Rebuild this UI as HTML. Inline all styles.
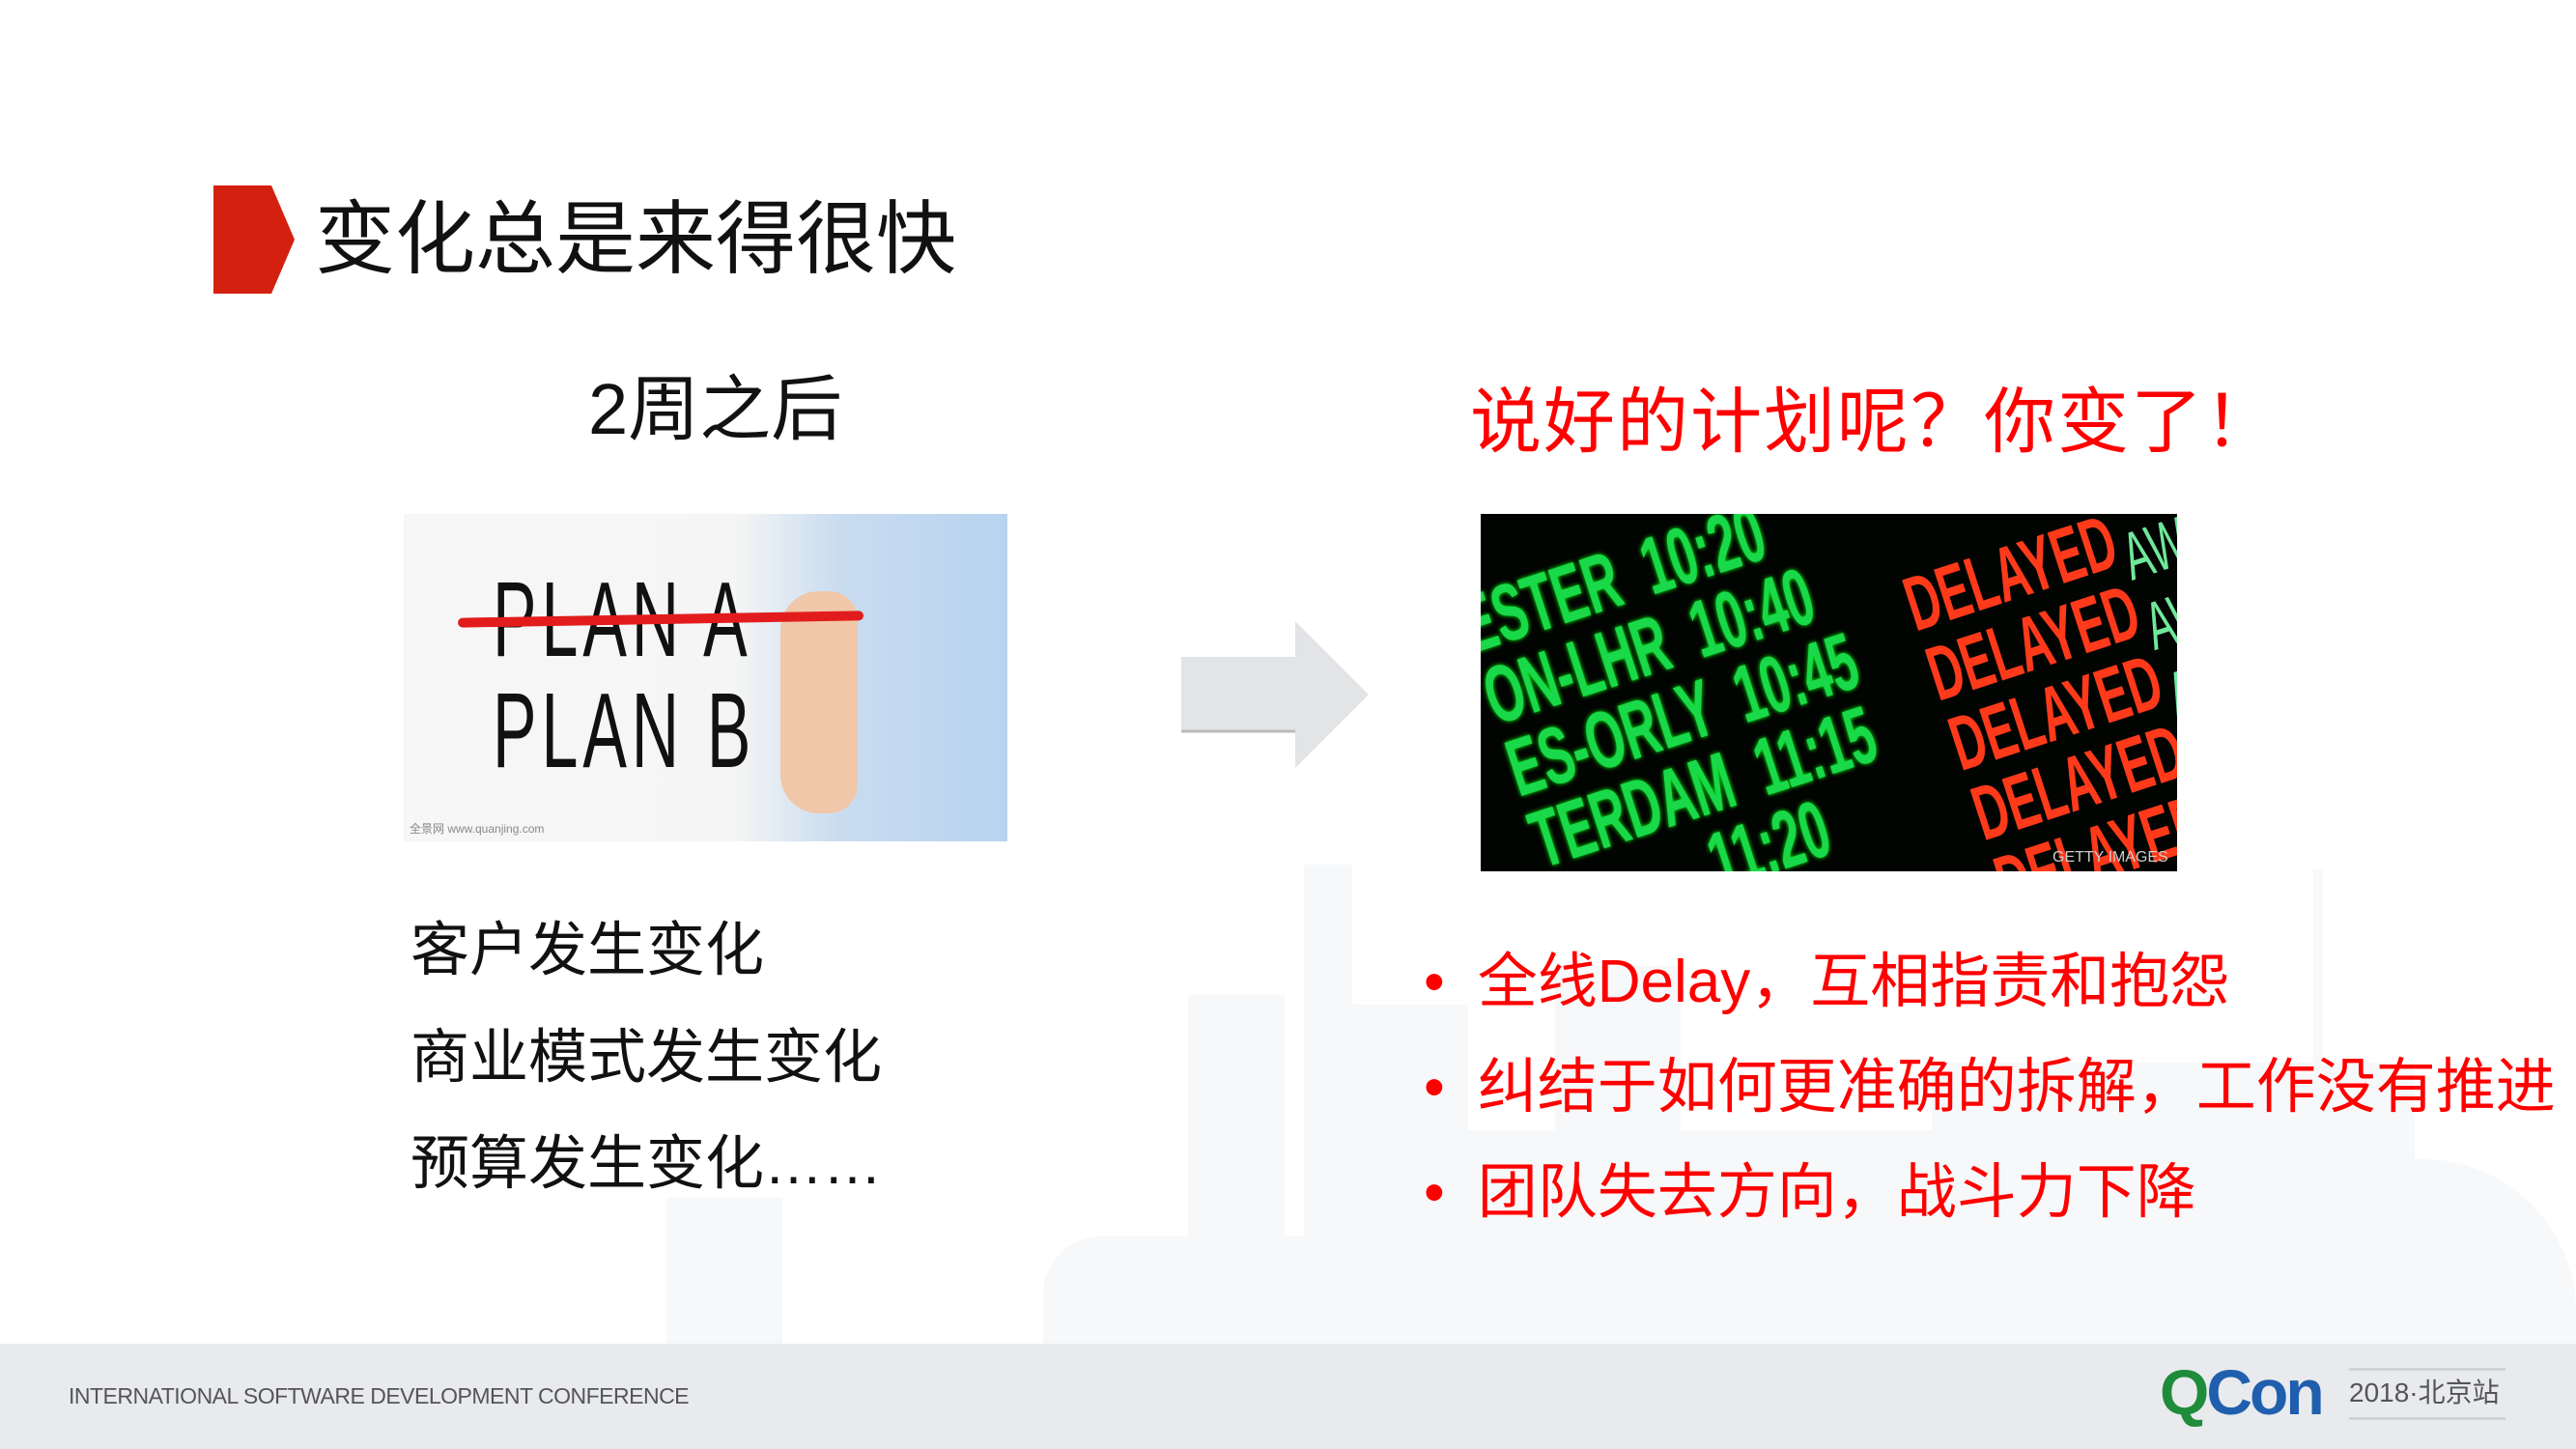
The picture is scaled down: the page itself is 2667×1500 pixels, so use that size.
<!DOCTYPE html>
<html><head><meta charset="utf-8"><style>
*{margin:0;padding:0;box-sizing:border-box}
body{width:2667px;height:1500px;position:relative;overflow:hidden;background:#fff;font-family:"Liberation Sans","Noto Sans CJK SC",sans-serif}
.a{position:absolute;white-space:nowrap;line-height:1}
.bg{position:absolute;background:#f7f8f9}
</style></head><body>
<!-- faint city silhouette -->
<div class="bg" style="left:1350px;top:895px;width:50px;height:500px"></div>
<div class="bg" style="left:1400px;top:1040px;width:120px;height:355px"></div>
<div class="bg" style="left:1230px;top:1030px;width:100px;height:365px"></div>
<div class="bg" style="left:1470px;top:1170px;width:560px;height:225px"></div>
<div class="bg" style="left:1610px;top:1000px;width:130px;height:395px"></div>
<div class="bg" style="left:2000px;top:1100px;width:500px;height:295px"></div>
<div class="bg" style="left:2350px;top:1200px;width:317px;height:195px;border-radius:200px 200px 0 0"></div>
<div class="bg" style="left:2395px;top:900px;width:10px;height:400px"></div>
<div class="bg" style="left:1080px;top:1280px;width:520px;height:115px;border-radius:60px 60px 0 0"></div>
<div class="bg" style="left:690px;top:1240px;width:120px;height:155px"></div>
<!-- footer -->
<div style="position:absolute;left:0;top:1391px;width:2667px;height:109px;background:#e8eaed"></div>
<div class="a" style="left:71px;top:1434px;font-size:23px;color:#555;letter-spacing:-0.5px">INTERNATIONAL SOFTWARE DEVELOPMENT CONFERENCE</div>
<div class="a" style="left:2236px;top:1408px;font-size:66px;font-weight:bold;letter-spacing:-3px"><span style="color:#1e8c3a">Q</span><span style="color:#1f5fae">Con</span></div>
<div style="position:absolute;left:2432px;top:1416px;width:162px;height:3px;background:#d0d2d5"></div>
<div style="position:absolute;left:2432px;top:1467px;width:162px;height:3px;background:#d0d2d5"></div>
<div class="a" style="left:2432px;top:1428px;font-size:28px;color:#555">2018·北京站</div>
<!-- title -->
<svg style="position:absolute;left:221px;top:192px" width="84" height="112"><polygon points="0,0 60,0 84,56 60,112 0,112" fill="#d4210f"/></svg>
<div class="a" style="left:326px;top:206px;font-size:83px;color:#111">变化总是来得很快</div>
<div class="a" style="left:609px;top:387px;font-size:74px;color:#111">2周之后</div>
<div class="a" style="left:1522px;top:400px;font-size:74px;color:#f00;letter-spacing:2px">说好的计划呢？你变了！</div>
<!-- plan image -->
<div style="position:absolute;left:418px;top:532px;width:625px;height:339px;background:linear-gradient(90deg,#f7f7f7 0,#f5f5f5 55%,#c9dcf0 72%,#b8d3ef 100%);overflow:hidden">
 <div style="position:absolute;left:390px;top:80px;width:80px;height:230px;background:#f0c7a8;border-radius:40px 30px 30px 40px"></div>
 <div class="a" style="left:92px;top:55px;font-size:110px;color:#111;font-family:'Liberation Sans Narrow','Liberation Sans',sans-serif;transform:scaleX(0.62);transform-origin:left;letter-spacing:8px">PLAN A</div>
 <div class="a" style="left:92px;top:170px;font-size:110px;color:#111;font-family:'Liberation Sans Narrow','Liberation Sans',sans-serif;transform:scaleX(0.62);transform-origin:left;letter-spacing:8px">PLAN B</div>
 <div style="position:absolute;left:56px;top:104px;width:420px;height:10px;background:#e21c1c;border-radius:5px;transform:rotate(-1deg)"></div>
 <div class="a" style="left:6px;top:320px;font-size:12px;color:#888">全景网 www.quanjing.com</div>
</div>
<!-- arrow -->
<svg style="position:absolute;left:1223px;top:643px" width="196" height="152"><polygon points="0,37 118,37 118,0 194,76 118,152 118,115 0,115" fill="#e3e4e6"/><line x1="0" y1="114" x2="118" y2="114" stroke="#bbb" stroke-width="3"/></svg>
<!-- board image -->
<div style="position:absolute;left:1533px;top:532px;width:721px;height:370px;background:#020402;overflow:hidden">
 <div style="position:absolute;left:-30px;top:80px;transform:rotate(-18deg) scaleX(0.6);transform-origin:left top;font-family:'Liberation Sans Narrow','Liberation Sans',sans-serif;font-weight:bold;font-size:84px;line-height:78px;color:#19d94a;text-shadow:0 0 6px #0f0">
  <div>ESTER &nbsp;10:20</div><div>ON-LHR &nbsp;10:40</div><div>ES-ORLY &nbsp;10:45</div><div>TERDAM &nbsp;11:15</div><div>&nbsp;&nbsp;&nbsp;&nbsp;&nbsp;&nbsp;&nbsp;&nbsp;&nbsp;&nbsp;&nbsp;&nbsp;11:20</div>
 </div>
 <div style="position:absolute;left:430px;top:60px;transform:rotate(-18deg) scaleX(0.6);transform-origin:left top;font-family:'Liberation Sans Narrow','Liberation Sans',sans-serif;font-weight:bold;font-size:80px;line-height:76px;color:#ff3a1a">
  <div>DELAYED</div><div>DELAYED</div><div>DELAYED</div><div>DELAYED</div><div>DELAYED</div>
 </div>
 <div style="position:absolute;left:655px;top:10px;transform:rotate(-18deg) scaleX(0.6);transform-origin:left top;font-family:'Liberation Sans Narrow','Liberation Sans',sans-serif;font-size:70px;line-height:76px;color:#6fe89a">
  <div>AWA</div><div>AWA</div><div>AW</div><div>AW</div>
 </div>
 <div class="a" style="left:592px;top:348px;font-size:16px;color:#ccc">GETTY IMAGES</div>
</div>
<!-- left list -->
<div class="a" style="left:425px;top:953px;font-size:61px;color:#111">客户发生变化</div>
<div class="a" style="left:425px;top:1064px;font-size:61px;color:#111">商业模式发生变化</div>
<div class="a" style="left:425px;top:1174px;font-size:61px;color:#111">预算发生变化……</div>
<!-- right bullets -->
<div class="a" style="left:1474px;top:986px;font-size:62px;color:#f00">•<span style="margin-left:34px">全线Delay，互相指责和抱怨</span></div>
<div class="a" style="left:1474px;top:1095px;font-size:62px;color:#f00">•<span style="margin-left:34px">纠结于如何更准确的拆解，工作没有推进</span></div>
<div class="a" style="left:1474px;top:1204px;font-size:62px;color:#f00">•<span style="margin-left:34px">团队失去方向，战斗力下降</span></div>
</body></html>
